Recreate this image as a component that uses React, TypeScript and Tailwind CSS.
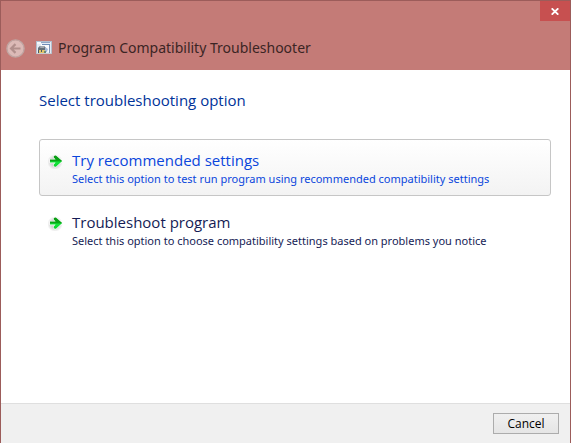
import clsx from "clsx";

const options = [
    {
        title: "Try recommended settings",
        text: "Select this option to test run program using recommended compatibility settings",
        active: true,
    },
    {
        title: "Troubleshoot program",
        text: "Select this option to choose compatibility settings based on problems you notice",
        active: false,
    },
];

function BackIcon() {
    return (
        <svg viewBox="0 0 20 20" className="size-5" aria-hidden="true">
            <circle cx="10.5" cy="10.5" r="8.6" fill="#dcbab7" stroke="#bfa5a2" strokeWidth="1.4" />
            <path d="M15.5 10.5H6.5M10.5 6.1L6.1 10.5l4.4 4.4" fill="none" stroke="#b18f8c" strokeWidth="2.2" />
        </svg>
    );
}

function ProgramIcon() {
    return (
        <svg viewBox="0 0 16 14" className="h-3.5 w-4" aria-hidden="true">
            <rect x="0.5" y="0.5" width="15" height="12" fill="#e4ebf3" stroke="#b3bfce" />
            <path d="M1 1h4v2H1z" fill="#f5f8fb" />
            <path d="M5 1h9v1H5z" fill="#8fa6c6" />
            <path d="M5 3h9v8H5z" fill="#fafbfd" />
            <path d="M6 3h8v1H6z" fill="#6f8db8" />
            <path d="M13 4h1v8h-1z" fill="#7f97ba" />
            <path d="M3 7V6h6v1" fill="none" stroke="#4c5661" />
            <path d="M2 7h8v2H2z" fill="#667078" />
            <path d="M3 9h6v3H3z" fill="#e2c66c" />
            <path d="M2 9h1v3H2zM5 9h1v2H5z" fill="#4c5661" />
            <path d="M9 6l3 2-1 3H9z" fill="#a5b9d6" />
            <path d="M8 10h2v2H8z" fill="#6d8a72" />
            <path d="M1 12.5h14" stroke="#c8ccd2" />
        </svg>
    );
}

function ArrowIcon() {
    return (
        <svg viewBox="0 0 16 16" className="mt-[3px] size-4 shrink-0" aria-hidden="true">
            <defs>
                <linearGradient id="arrow" x1="0" y1="0" x2="0" y2="1">
                    <stop offset="0" stopColor="#0a9a12" />
                    <stop offset="0.45" stopColor="#08a516" />
                    <stop offset="0.6" stopColor="#12e63a" />
                    <stop offset="1" stopColor="#10d032" />
                </linearGradient>
                <radialGradient id="shade">
                    <stop offset="0.5" stopColor="#d0d0d0" />
                    <stop offset="1" stopColor="#d0d0d0" stopOpacity="0" />
                </radialGradient>
            </defs>
            <circle cx="7" cy="9" r="7.8" fill="url(#shade)" />
            <path
                d="M2 6.6h5.6L5.8 4.6C5 3.4 6.8 1.6 8.2 2.8L14.2 8l-6 5.4c-1.4 1.2-3.2-.6-2.4-1.8l1.8-2H2z"
                fill="url(#arrow)"
                stroke="#fff"
                strokeWidth="1.2"
                strokeLinejoin="round"
                paintOrder="stroke"
            />
        </svg>
    );
}

export default function App() {
    return (
        <div className="flex min-h-screen flex-col border-x border-t border-[#9c5c5a] bg-white font-['Open_Sans','Noto_Sans',sans-serif]">
            <header className="bg-[#c47b77]">
                <div className="flex h-5 justify-end">
                    <button type="button" aria-label="Close" className="flex w-[30px] items-center justify-center bg-[#c75050]">
                        <svg viewBox="0 0 8 7" className="h-[7px] w-2" aria-hidden="true">
                            <path d="M0.7 0.3L7.3 6.7M7.3 0.3L0.7 6.7" stroke="#fff" strokeWidth="1.8" />
                        </svg>
                    </button>
                </div>
                <div className="flex h-[49px] items-center gap-[11px] pt-1 pl-1">
                    <button type="button" aria-label="Back" disabled>
                        <BackIcon />
                    </button>
                    <div className="flex items-center gap-1.5">
                        <ProgramIcon />
                        <h1 className="font-['Noto_Sans',sans-serif] text-[14px] leading-5 text-[#3b2524]">
                            Program Compatibility Troubleshooter
                        </h1>
                    </div>
                </div>
            </header>

            <main className="flex-1 pt-5 pr-[19px] pl-[38px]">
                <h2 className="text-[15px] leading-5 text-[#003399]">Select troubleshooting option</h2>
                <div className="mt-[29px] flex flex-col gap-[5px]">
                    {options.map((o) => (
                        <button
                            key={o.title}
                            type="button"
                            className={clsx(
                                "flex items-start gap-2 rounded-[3px] border px-2 pt-2.5 pb-[7px] text-left",
                                o.active
                                    ? "border-[#c6c6c6] bg-linear-to-b from-white to-[#f3f3f3] text-[#0a46dc]"
                                    : "border-transparent text-[#151c55]"
                            )}
                        >
                            <ArrowIcon />
                            <span>
                                <span className="block text-[15px] leading-5">{o.title}</span>
                                <span className="block font-['Noto_Sans',sans-serif] text-[11px] leading-[18px]">{o.text}</span>
                            </span>
                        </button>
                    ))}
                </div>
            </main>

            <footer className="flex justify-end border-t border-[#dfdfdf] bg-[#f0f0f0] px-[11px] py-[9px]">
                <button
                    type="button"
                    className="h-[21px] w-[66px] border border-[#acacac] bg-linear-to-b from-[#f0f0f0] to-[#e5e5e5] text-[12px] leading-4 text-black"
                >
                    Cancel
                </button>
            </footer>
        </div>
    );
}
